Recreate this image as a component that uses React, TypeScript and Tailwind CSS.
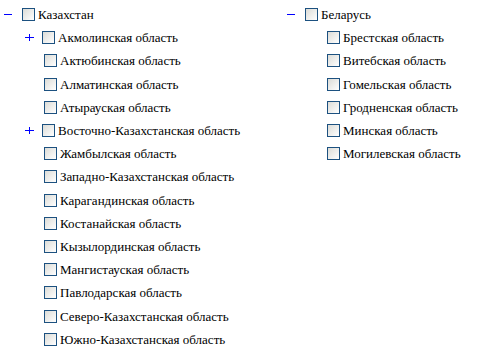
import React from 'react';

type Node = { label: string; toggle?: '+' | '–'; children?: Node[] };

const kz: Node = {
  label: 'Казахстан',
  toggle: '–',
  children: [
    { label: 'Акмолинская область', toggle: '+' },
    { label: 'Актюбинская область' },
    { label: 'Алматинская область' },
    { label: 'Атырауская область' },
    { label: 'Восточно-Казахстанская область', toggle: '+' },
    { label: 'Жамбылская область' },
    { label: 'Западно-Казахстанская область' },
    { label: 'Карагандинская область' },
    { label: 'Костанайская область' },
    { label: 'Кызылординская область' },
    { label: 'Мангистауская область' },
    { label: 'Павлодарская область' },
    { label: 'Северо-Казахстанская область' },
    { label: 'Южно-Казахстанская область' },
  ],
};

const by: Node = {
  label: 'Беларусь',
  toggle: '–',
  children: [
    { label: 'Брестская область' },
    { label: 'Витебская область' },
    { label: 'Гомельская область' },
    { label: 'Гродненская область' },
    { label: 'Минская область' },
    { label: 'Могилевская область' },
  ],
};

const Box = () => (
  <span className="inline-block w-[13px] h-[13px] shrink-0 border border-[#1c5180] bg-gradient-to-br from-[#dcdcd7] to-[#ffffff]" />
);

const Toggle = ({ t }: { t?: '+' | '–' }) => {
  if (t === '–') return <span className="block w-[8px] h-[1px] bg-[#0000ff]" />;
  if (t === '+')
    return (
      <span className="relative block w-[9px] h-[9px]">
        <span className="absolute left-0 top-[4px] w-[9px] h-[1px] bg-[#0000ff]" />
        <span className="absolute left-[4px] top-[1px] w-[1px] h-[7px] bg-[#0000ff]" />
      </span>
    );
  return null;
};

const Row = ({ node, child }: { node: Node; child?: boolean }) => (
  <div className="flex items-center h-[23.2px]">
    {child ? (
      node.toggle ? (
        <div className="flex items-center pl-[25px] gap-[8px]">
          <Toggle t={node.toggle} />
          <Box />
        </div>
      ) : (
        <div className="pl-[44px] flex">
          <Box />
        </div>
      )
    ) : (
      <div className="flex items-center pl-[4px] gap-[10px]">
        <Toggle t={node.toggle} />
        <Box />
      </div>
    )}
    <span className="ml-[3px] text-[13px] leading-none text-black whitespace-nowrap">{node.label}</span>
  </div>
);

const Tree = ({ node }: { node: Node }) => (
  <div className="flex flex-col">
    <Row node={node} />
    {node.children?.map((c) => (
      <Row key={c.label} node={c} child />
    ))}
  </div>
);

export default function App() {
  return (
    <div className="w-[481px] h-[363px] bg-white flex pt-[3px] [font-family:'Liberation_Serif']">
      <div className="w-[284px]">
        <Tree node={kz} />
      </div>
      <div className="-ml-[1px]">
        <Tree node={by} />
      </div>
    </div>
  );
}
